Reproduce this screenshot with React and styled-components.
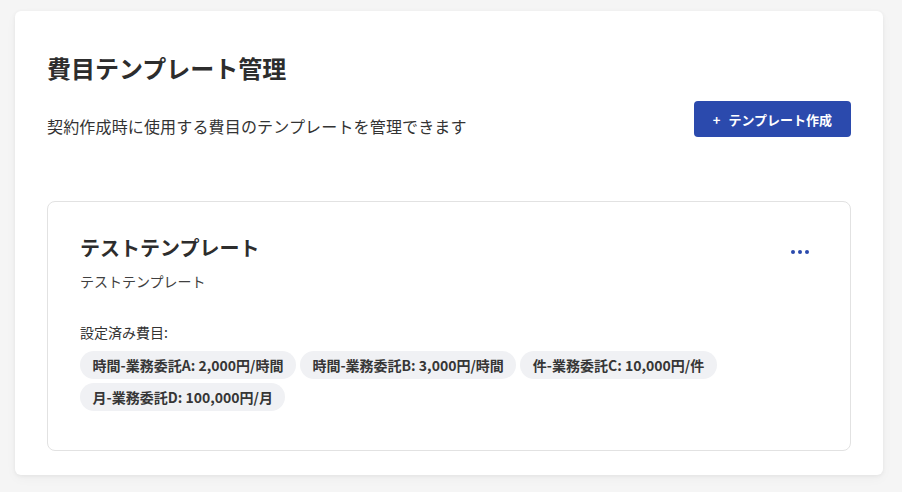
import React from "react";
import styled, { createGlobalStyle } from "styled-components";

const GlobalStyle = createGlobalStyle`
  * { box-sizing: border-box; }
  html, body { margin: 0; padding: 0; background: #f5f5f5; }
  body {
    font-family: "Noto Sans CJK JP", "Noto Sans", sans-serif;
    color: #333333;
  }
`;

const Page = styled.div`
  padding: 11px 19px 16px 15px;
`;

const Panel = styled.section`
  width: 868px;
  background: #ffffff;
  border-radius: 6px;
  box-shadow: 0 1px 4px rgba(0, 0, 0, 0.06), 0 4px 12px rgba(0, 0, 0, 0.03);
  padding: 39px 32px 24px 32px;
`;

const Header = styled.div`
  display: flex;
  justify-content: space-between;
  align-items: flex-end;
`;

const HeaderText = styled.div`
  display: flex;
  flex-direction: column;
`;

const Title = styled.h1`
  margin: 0 0 28px 0;
  font-size: 24px;
  line-height: 36px;
  font-weight: 700;
  color: #2d2d2d;
`;

const Description = styled.p`
  margin: 0;
  font-size: 16px;
  line-height: 24px;
  letter-spacing: 0.01em;
  color: #333333;
`;

const PrimaryButton = styled.button`
  display: inline-flex;
  align-items: center;
  gap: 8px;
  height: 36px;
  margin-bottom: 1px;
  padding: 0 19px 0 19px;
  border: none;
  border-radius: 4px;
  background: #2b4aad;
  color: #ffffff;
  font-family: inherit;
  font-size: 13px;
  font-weight: 700;
  cursor: pointer;
`;

const TemplateList = styled.div`
  margin-top: 63px;
  display: flex;
  flex-direction: column;
  gap: 16px;
`;

const Card = styled.article`
  border: 1px solid #e2e2e2;
  border-radius: 8px;
  padding: 31px 32px 39px 32px;
`;

const CardHeader = styled.div`
  display: flex;
  justify-content: space-between;
  align-items: flex-start;
`;

const CardTitle = styled.h2`
  margin: 0;
  font-size: 20px;
  line-height: 30px;
  font-weight: 700;
  color: #2d2d2d;
`;

const CardDescription = styled.p`
  margin: 8px 0 0 0;
  font-size: 14px;
  line-height: 21px;
  color: #404040;
`;

const MenuButton = styled.button`
  width: 24px;
  height: 24px;
  margin: 7px 6px 0 0;
  padding: 0;
  border: none;
  background: transparent;
  color: #2b4aad;
  display: flex;
  align-items: center;
  justify-content: center;
  cursor: pointer;
`;

const FeesLabel = styled.div`
  margin-top: 30px;
  font-size: 14px;
  line-height: 21px;
  color: #333333;
`;

const ChipRow = styled.div`
  margin-top: 8px;
  display: flex;
  flex-wrap: wrap;
  gap: 4px;
`;

const Chip = styled.span`
  display: inline-flex;
  align-items: center;
  height: 28px;
  padding: 0 12.5px;
  border-radius: 14px;
  background: #f0f1f4;
  font-size: 14px;
  font-weight: 600;
  color: #363636;
  white-space: nowrap;
`;

const fees = [
  "時間-業務委託A: 2,000円/時間",
  "時間-業務委託B: 3,000円/時間",
  "件-業務委託C: 10,000円/件",
  "月-業務委託D: 100,000円/月",
];

const DotsIcon = () => (
  <svg width="24" height="24" viewBox="0 0 24 24" fill="currentColor">
    <circle cx="5" cy="12" r="2" />
    <circle cx="12" cy="12" r="2" />
    <circle cx="19" cy="12" r="2" />
  </svg>
);

export default function App() {
  return (
    <>
      <GlobalStyle />
      <Page>
        <Panel>
          <Header>
            <HeaderText>
              <Title>費目テンプレート管理</Title>
              <Description>
                契約作成時に使用する費目のテンプレートを管理できます
              </Description>
            </HeaderText>
            <PrimaryButton>
              <span>+</span>
              <span>テンプレート作成</span>
            </PrimaryButton>
          </Header>
          <TemplateList>
            <Card>
              <CardHeader>
                <div>
                  <CardTitle>テストテンプレート</CardTitle>
                  <CardDescription>テストテンプレート</CardDescription>
                </div>
                <MenuButton aria-label="メニュー">
                  <DotsIcon />
                </MenuButton>
              </CardHeader>
              <FeesLabel>設定済み費目:</FeesLabel>
              <ChipRow>
                {fees.map((f) => (
                  <Chip key={f}>{f}</Chip>
                ))}
              </ChipRow>
            </Card>
          </TemplateList>
        </Panel>
      </Page>
    </>
  );
}
